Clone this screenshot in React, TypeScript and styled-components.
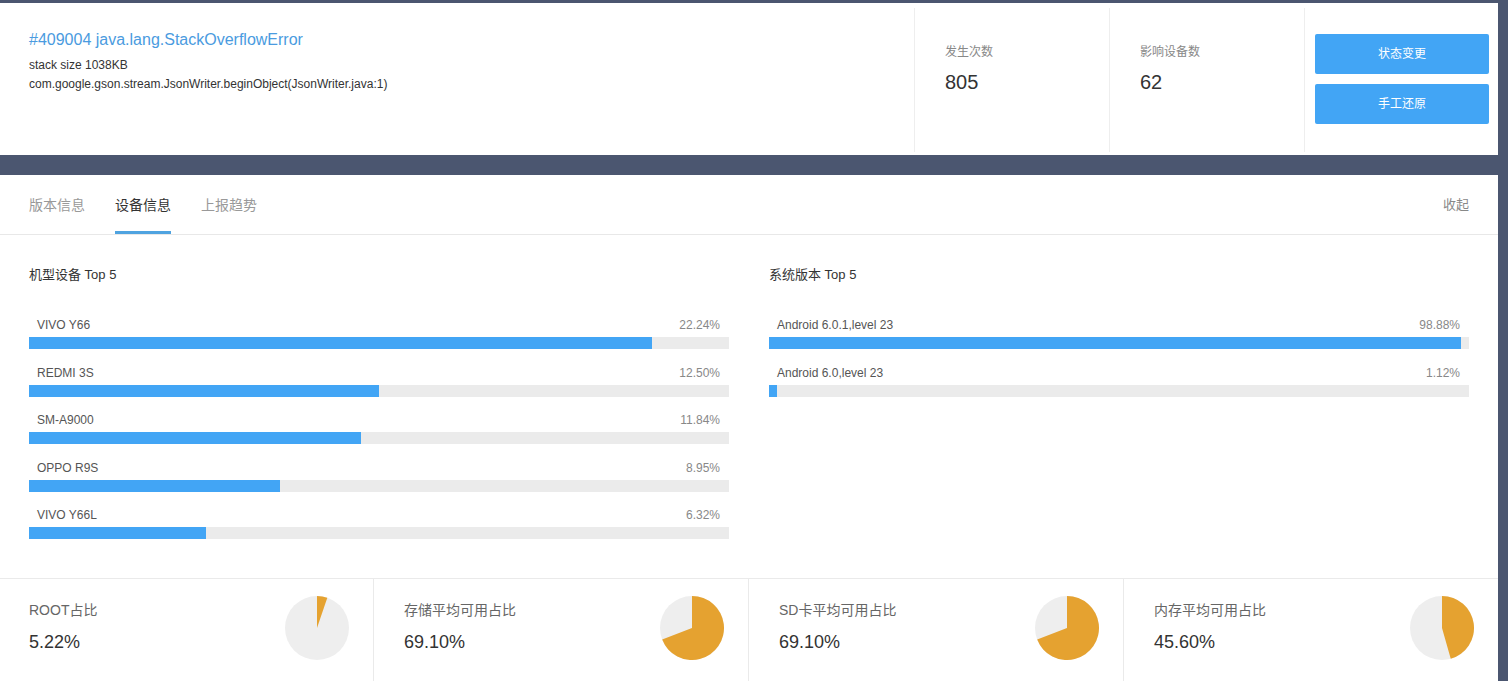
import React from "react";
import styled, { createGlobalStyle } from "styled-components";

const Global = createGlobalStyle`
  html, body { margin: 0; padding: 0; }
  body {
    background: #4b5670;
    font-family: "Liberation Sans", Arial, "Noto Sans CJK SC", sans-serif;
    overflow: hidden;
  }
`;

const Page = styled.div`
  padding-top: 3px;
  width: 1498px;
`;

const TopCard = styled.div`
  background: #fff;
  height: 152px;
  display: flex;
`;

const Info = styled.div`
  flex: 1;
  padding: 27px 29px;
`;

const Title = styled.div`
  color: #4a9be0;
  font-size: 16px;
  line-height: 20px;
  margin-bottom: 6px;
`;

const SubLine = styled.div`
  color: #333;
  font-size: 12px;
  line-height: 19px;
`;

const StatCell = styled.div`
  width: 164px;
  border-left: 1px solid #eeeeee;
  margin: 5px 0 3px;
  padding: 36px 0 0 30px;
`;

const StatLabel = styled.div`
  color: #888;
  font-size: 12px;
  line-height: 16px;
`;

const StatValue = styled.div`
  color: #333;
  font-size: 20px;
  line-height: 24px;
  margin-top: 10px;
`;

const ActionCell = styled.div`
  width: 183px;
  border-left: 1px solid #eeeeee;
  margin: 5px 0 3px;
  padding: 26px 0 0 10px;
  display: flex;
  flex-direction: column;
  gap: 10px;
`;

const ActionButton = styled.button`
  width: 174px;
  height: 40px;
  padding: 0 0 3px;
  border: none;
  border-radius: 2px;
  background: #42a5f5;
  color: #fff;
  font-family: inherit;
  font-size: 12px;
  cursor: pointer;
`;

const MainCard = styled.div`
  background: #fff;
  margin-top: 20px;
`;

const TabBar = styled.div`
  height: 59px;
  border-bottom: 1px solid #e8e8e8;
  display: flex;
  align-items: stretch;
  padding: 0 29px;
  gap: 30px;
`;

const Tab = styled.div<{ $active?: boolean }>`
  font-size: 14px;
  color: ${(p) => (p.$active ? "#333" : "#999")};
  display: flex;
  align-items: center;
  padding-top: 1px;
  border-bottom: 3px solid ${(p) => (p.$active ? "#4fa3e0" : "transparent")};
  box-sizing: border-box;
`;

const TabSpacer = styled.div`
  flex: 1;
`;

const Collapse = styled.div`
  font-size: 13px;
  color: #888;
  display: flex;
  align-items: center;
  padding-bottom: 2px;
`;

const Columns = styled.div`
  display: grid;
  grid-template-columns: 700px 700px;
  column-gap: 40px;
  padding: 31px 29px 39px;
`;

const Column = styled.div``;

const ColumnTitle = styled.div`
  font-size: 13px;
  line-height: 18px;
  color: #333;
  margin-bottom: 33px;
`;

const Row = styled.div`
  margin-bottom: 15.5px;
  &:last-child { margin-bottom: 0; }
`;

const RowHead = styled.div`
  display: flex;
  justify-content: space-between;
  padding: 0 9px 0 8px;
  font-size: 12px;
  line-height: 16px;
  margin-bottom: 4px;
`;

const RowName = styled.span`
  color: #555;
`;

const RowPct = styled.span`
  color: #888;
`;

const Track = styled.div`
  height: 12px;
  background: #ebebeb;
`;

const Fill = styled.div`
  height: 100%;
  background: #42a5f5;
`;

const Bottom = styled.div`
  border-top: 1px solid #eaeaea;
  display: flex;
  height: 110px;
`;

const BottomCell = styled.div`
  flex: 1;
  display: flex;
  justify-content: space-between;
  padding: 17px 24px 0 30px;
  & + & { border-left: 1px solid #eaeaea; }
  &:first-child { padding-left: 29px; }
`;

const CellText = styled.div`
  padding-top: 5px;
`;

const CellLabel = styled.div`
  font-size: 14px;
  line-height: 18px;
  color: #666;
`;

const CellValue = styled.div`
  font-size: 18px;
  line-height: 22px;
  color: #333;
  margin-top: 12px;
`;

const PieSvg = styled.svg`
  display: block;
`;

function Pie({ pct }: { pct: number }) {
  const r = 32;
  const c = 32;
  const a = (pct / 100) * Math.PI * 2;
  const x = c + r * Math.sin(a);
  const y = c - r * Math.cos(a);
  const large = pct > 50 ? 1 : 0;
  return (
    <PieSvg width={64} height={64} viewBox="0 0 64 64">
      <circle cx={c} cy={c} r={r} fill="#eeeeee" />
      <path d={`M${c},${c} L${c},${c - r} A${r},${r} 0 ${large} 1 ${x},${y} Z`} fill="#e5a230" />
    </PieSvg>
  );
}

const models = [
  ["VIVO Y66", 22.24],
  ["REDMI 3S", 12.5],
  ["SM-A9000", 11.84],
  ["OPPO R9S", 8.95],
  ["VIVO Y66L", 6.32],
] as const;

const systems = [
  ["Android 6.0.1,level 23", 98.88],
  ["Android 6.0,level 23", 1.12],
] as const;

const stats = [
  ["ROOT占比", 5.22],
  ["存储平均可用占比", 69.1],
  ["SD卡平均可用占比", 69.1],
  ["内存平均可用占比", 45.6],
] as const;

function Bars({ items, scale }: { items: readonly (readonly [string, number])[]; scale: number }) {
  return (
    <>
      {items.map(([name, v]) => (
        <Row key={name}>
          <RowHead>
            <RowName>{name}</RowName>
            <RowPct>{v.toFixed(2)}%</RowPct>
          </RowHead>
          <Track>
            <Fill style={{ width: `${Math.min(100, v * scale)}%` }} />
          </Track>
        </Row>
      ))}
    </>
  );
}

export default function App() {
  return (
    <>
      <Global />
      <Page>
        <TopCard>
          <Info>
            <Title>#409004 java.lang.StackOverflowError</Title>
            <SubLine>stack size 1038KB</SubLine>
            <SubLine>com.google.gson.stream.JsonWriter.beginObject(JsonWriter.java:1)</SubLine>
          </Info>
          <StatCell>
            <StatLabel>发生次数</StatLabel>
            <StatValue>805</StatValue>
          </StatCell>
          <StatCell>
            <StatLabel>影响设备数</StatLabel>
            <StatValue>62</StatValue>
          </StatCell>
          <ActionCell>
            <ActionButton>状态变更</ActionButton>
            <ActionButton>手工还原</ActionButton>
          </ActionCell>
        </TopCard>
        <MainCard>
          <TabBar>
            <Tab>版本信息</Tab>
            <Tab $active>设备信息</Tab>
            <Tab>上报趋势</Tab>
            <TabSpacer />
            <Collapse>收起</Collapse>
          </TabBar>
          <Columns>
            <Column>
              <ColumnTitle>机型设备 Top 5</ColumnTitle>
              <Bars items={models} scale={4} />
            </Column>
            <Column>
              <ColumnTitle>系统版本 Top 5</ColumnTitle>
              <Bars items={systems} scale={1} />
            </Column>
          </Columns>
          <Bottom>
            {stats.map(([label, v]) => (
              <BottomCell key={label}>
                <CellText>
                  <CellLabel>{label}</CellLabel>
                  <CellValue>{v.toFixed(2)}%</CellValue>
                </CellText>
                <Pie pct={v} />
              </BottomCell>
            ))}
          </Bottom>
        </MainCard>
      </Page>
    </>
  );
}
